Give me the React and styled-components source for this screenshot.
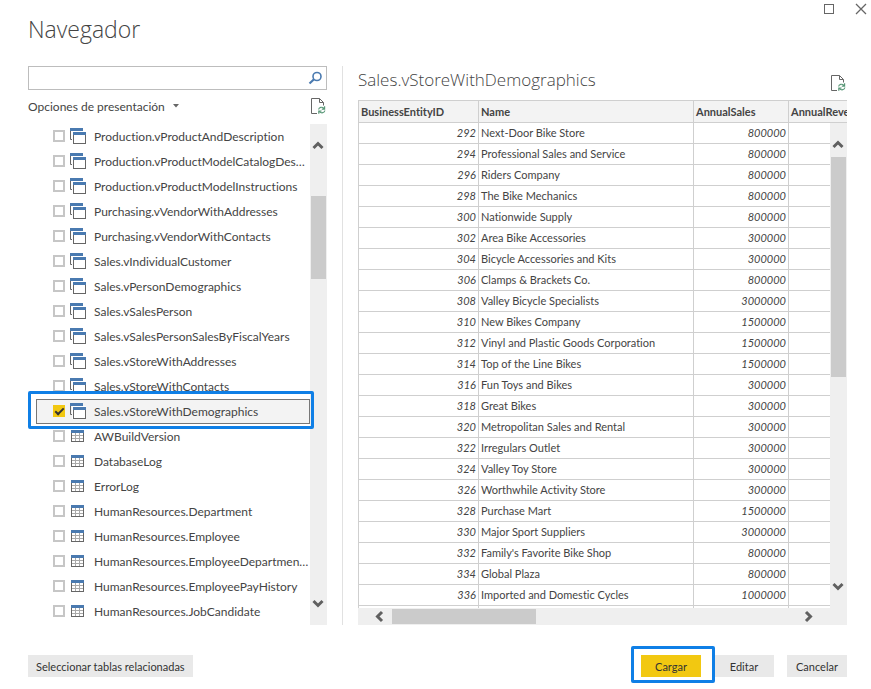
import React, { useState } from "react";
import styled, { createGlobalStyle } from "styled-components";

const GlobalStyle = createGlobalStyle`
  *, *::before, *::after { box-sizing: border-box; }
  body {
    margin: 0;
    background: #fff;
    color: #444;
    font-family: Lato, "Open Sans", sans-serif;
    font-size: 12px;
    font-variant-ligatures: none;
  }
  button, input { font: inherit; color: inherit; }
`;

const Dialog = styled.div`
  display: flex;
  flex-direction: column;
  height: 100vh;
  padding: 0 24px 8px 28px;
  overflow: hidden;
`;

const TitleBar = styled.header`
  display: flex;
  flex: none;
  justify-content: space-between;
  height: 66px;
`;

const Title = styled.h1`
  margin: 11px 0 0;
  font-family: "Open Sans", sans-serif;
  font-size: 23px;
  font-weight: 300;
  line-height: 36px;
`;

const WindowControls = styled.div`
  display: flex;
  gap: 20px;
  align-items: flex-start;
  margin: 3px -20px 0 0;
`;

const IconButton = styled.button`
  display: flex;
  padding: 0;
  border: 0;
  background: none;
  cursor: pointer;
`;

const Panels = styled.main`
  display: grid;
  grid-template-columns: minmax(0, 5fr) minmax(0, 8fr);
  flex: 1;
  min-height: 0;
  margin-bottom: 26px;
`;

const TreePanel = styled.section`
  display: flex;
  flex-direction: column;
  min-height: 0;
  padding-right: 15px;
  border-right: 1px solid #e1e1e1;
`;

const SearchBox = styled.label`
  display: flex;
  flex: none;
  align-items: center;
  height: 24px;
  padding: 0 4px;
  border: 1px solid #bdbdbd;
`;

const SearchInput = styled.input`
  flex: 1;
  min-width: 0;
  border: 0;
  outline: 0;
  background: none;
`;

const OptionsRow = styled.div`
  display: flex;
  flex: none;
  align-items: center;
  justify-content: space-between;
  height: 34px;
  padding-bottom: 2px;
`;

const OptionsButton = styled(IconButton)`
  align-items: center;
  gap: 8px;
`;

const ListFrame = styled.div`
  display: flex;
  flex: 1;
  min-height: 0;
`;

const List = styled.ul`
  flex: 1;
  min-width: 0;
  margin: 0;
  padding: 0 0 0 8px;
  list-style: none;
`;

const Item = styled.li`
  position: relative;
  height: 25px;
  border: 1px solid ${(p) => (p.$selected ? "#777" : "transparent")};
  background: ${(p) => (p.$selected ? "#f3f3f3" : "none")};
`;

const ItemLabel = styled.label`
  display: flex;
  align-items: center;
  height: 22px;
  padding-left: 16px;
`;

const CheckBox = styled.input`
  flex: none;
  display: grid;
  place-items: center;
  width: 12px;
  height: 12px;
  margin: 0 5px 0 0;
  appearance: none;
  border: 2px solid #c6c6c6;
  background: #fff;
  &:checked {
    border-color: #f2c811;
    background: #f2c811;
  }
  &:checked::before {
    content: "";
    width: 9px;
    height: 5px;
    margin-top: -2px;
    border: solid #333;
    border-width: 0 0 2px 2px;
    transform: rotate(-45deg);
  }
`;

const ItemText = styled.span`
  flex: 1;
  min-width: 0;
  margin-left: 8px;
  padding-top: 1px;
  line-height: 21px;
  overflow: hidden;
  text-overflow: ellipsis;
  white-space: nowrap;
`;

const Highlight = styled.span`
  position: absolute;
  inset: ${(p) => p.$inset};
  border: 3px solid #0f7fe6;
  border-radius: 2px;
  pointer-events: none;
  z-index: 1;
`;

const Track = styled.div`
  display: flex;
  flex: none;
  flex-direction: ${(p) => (p.$horizontal ? "row" : "column")};
  ${(p) => (p.$horizontal ? "height: 17px; padding-right: 17px;" : "width: 17px;")}
  background: #efefef;
`;

const ArrowButton = styled(IconButton)`
  flex: 0 0 34px;
  align-items: center;
  justify-content: center;
  padding: ${(p) => p.$pad};
`;

const Gap = styled.span`
  flex: ${(p) => p.$grow};
`;

const Thumb = styled.span`
  flex: ${(p) => p.$grow};
  margin: ${(p) => (p.$horizontal ? "1px 0" : "0 1px")};
  background: #cbcbcb;
`;

const PreviewPanel = styled.section`
  display: flex;
  flex-direction: column;
  min-width: 0;
  min-height: 0;
  padding-left: 15px;
`;

const PreviewHeader = styled.div`
  display: flex;
  flex: none;
  justify-content: space-between;
  align-items: center;
  height: 34px;
`;

const PreviewTitle = styled.h2`
  margin: 0 0 8px;
  font-family: "Open Sans", sans-serif;
  font-size: 17px;
  font-weight: 300;
`;

const GridFrame = styled.div`
  position: relative;
  flex: 1;
  min-height: 0;
  overflow: hidden;
`;

const GridScroll = styled.div`
  position: absolute;
  inset: 23px 0 0 auto;
  display: flex;
`;

const Table = styled.table`
  width: 580px;
  table-layout: fixed;
  border-collapse: collapse;
  font-size: 11px;
`;

const Th = styled.th`
  width: ${(p) => p.$width};
  height: 22px;
  padding: 0 2px;
  border: 1px solid #cfcfcf;
  background: #f3f3f3;
  text-align: left;
  font-weight: 700;
`;

const Td = styled.td`
  height: 21px;
  padding: 0 2px;
  border: 1px solid #cfcfcf;
  line-height: 16px;
  white-space: nowrap;
  text-align: ${(p) => (p.$number ? "right" : "left")};
  font-style: ${(p) => (p.$number ? "italic" : "normal")};
`;

const Footer = styled.footer`
  display: flex;
  flex: none;
  align-items: center;
  justify-content: space-between;
  height: 30px;
`;

const Actions = styled.div`
  display: flex;
  gap: 13px;
`;

const Emphasis = styled.div`
  position: relative;
  display: flex;
`;

const Button = styled.button`
  min-width: 60px;
  height: 22px;
  padding: 0 8px;
  border: 0;
  background: ${(p) => (p.$primary ? "#f2c811" : "#e9e9e9")};
  color: #333;
  font-size: 11px;
  cursor: pointer;
`;

const ViewIcon = () => (
  <svg width="16" height="16" viewBox="0 0 16 16" aria-hidden="true">
    <path d="M0.5 3V11.5H2" fill="none" stroke="#666" />
    <rect x="0" y="0" width="13" height="3" fill="#4a7ab0" />
    <rect x="2" y="3" width="14" height="13" fill="#fff" />
    <rect x="3.5" y="4.5" width="12" height="11" fill="#fff" stroke="#666" />
    <rect x="3" y="4" width="13" height="3" fill="#4a7ab0" />
  </svg>
);

const TableIcon = () => (
  <svg width="16" height="16" viewBox="0 0 16 16" aria-hidden="true">
    <rect x="1.5" y="2.5" width="12" height="11" fill="#fff" stroke="#666" />
    <path d="M5.5 5V13M9.5 5V13M2 7.5H13M2 10.5H13" stroke="#aaa" />
    <rect x="1" y="2" width="13" height="3" fill="#4a7ab0" />
  </svg>
);

const SearchIcon = () => (
  <svg width="14" height="14" viewBox="0 0 14 14" fill="none" stroke="#4a7ab0" aria-hidden="true">
    <circle cx="9" cy="5.5" r="4" strokeWidth="1.6" />
    <path d="M6 8.3L1.5 12.5" strokeWidth="2.2" />
  </svg>
);

const RefreshIcon = () => (
  <svg width="16" height="18" viewBox="0 0 16 18" fill="none" aria-hidden="true">
    <path d="M6 16.5H0.5V1.5H8.5L12.5 5.5V8.5M8.5 1.5V5.5H12.5" stroke="#666" />
    <path d="M7.6 12.5C8 10.2 11 9.4 13 11.4M13.6 9.3V12.1H10.8M13.9 13.5C13.4 15.9 10.4 16.6 8.5 14.6M7.8 16.8V14H10.6" stroke="#5a9878" strokeWidth="1.2" />
  </svg>
);

const CHEVRONS = {
  up: "M2.5 10L7 5.5L11.5 10",
  down: "M2.5 5L7 9.5L11.5 5",
  left: "M10 3L5.5 7.5L10 12",
  right: "M5 3L9.5 7.5L5 12",
};

const Chevron = ({ dir }) => (
  <svg width="15" height="15" viewBox="0 0 15 15" fill="none" stroke="#606060" strokeWidth="3" aria-hidden="true">
    <path d={CHEVRONS[dir]} />
  </svg>
);

const ScrollBar = ({ horizontal, before, size, after }) => (
  <Track $horizontal={horizontal}>
    <ArrowButton aria-label={horizontal ? "Izquierda" : "Arriba"} $pad={horizontal ? "0 0 0 9px" : "9px 0 0"}>
      <Chevron dir={horizontal ? "left" : "up"} />
    </ArrowButton>
    <Gap $grow={before} />
    <Thumb $grow={size} $horizontal={horizontal} />
    <Gap $grow={after} />
    <ArrowButton aria-label={horizontal ? "Derecha" : "Abajo"} $pad={horizontal ? "0 9px 0 0" : "0 0 9px"}>
      <Chevron dir={horizontal ? "right" : "down"} />
    </ArrowButton>
  </Track>
);

const VIEWS = [
  "Production.vProductAndDescription",
  "Production.vProductModelCatalogDescriptions",
  "Production.vProductModelInstructions",
  "Purchasing.vVendorWithAddresses",
  "Purchasing.vVendorWithContacts",
  "Sales.vIndividualCustomer",
  "Sales.vPersonDemographics",
  "Sales.vSalesPerson",
  "Sales.vSalesPersonSalesByFiscalYears",
  "Sales.vStoreWithAddresses",
  "Sales.vStoreWithContacts",
  "Sales.vStoreWithDemographics",
];

const TABLES = [
  "AWBuildVersion",
  "DatabaseLog",
  "ErrorLog",
  "HumanResources.Department",
  "HumanResources.Employee",
  "HumanResources.EmployeeDepartmentHistory",
  "HumanResources.EmployeePayHistory",
  "HumanResources.JobCandidate",
];

const ITEMS = [
  ...VIEWS.map((name) => ({ name, view: true })),
  ...TABLES.map((name) => ({ name, view: false })),
];

const FOCUSED = "Sales.vStoreWithDemographics";

const ROWS = [
  [292, "Next-Door Bike Store", 800000],
  [294, "Professional Sales and Service", 800000],
  [296, "Riders Company", 800000],
  [298, "The Bike Mechanics", 800000],
  [300, "Nationwide Supply", 800000],
  [302, "Area Bike Accessories", 300000],
  [304, "Bicycle Accessories and Kits", 300000],
  [306, "Clamps & Brackets Co.", 800000],
  [308, "Valley Bicycle Specialists", 3000000],
  [310, "New Bikes Company", 1500000],
  [312, "Vinyl and Plastic Goods Corporation", 1500000],
  [314, "Top of the Line Bikes", 1500000],
  [316, "Fun Toys and Bikes", 300000],
  [318, "Great Bikes", 300000],
  [320, "Metropolitan Sales and Rental", 300000],
  [322, "Irregulars Outlet", 300000],
  [324, "Valley Toy Store", 300000],
  [326, "Worthwhile Activity Store", 300000],
  [328, "Purchase Mart", 1500000],
  [330, "Major Sport Suppliers", 3000000],
  [332, "Family's Favorite Bike Shop", 800000],
  [334, "Global Plaza", 800000],
  [336, "Imported and Domestic Cycles", 1000000],
];

export default function App() {
  const [checked, setChecked] = useState([FOCUSED]);
  const [query, setQuery] = useState("");

  const toggle = (name) =>
    setChecked((list) => (list.includes(name) ? list.filter((n) => n !== name) : [...list, name]));

  return (
    <>
      <GlobalStyle />
      <Dialog>
        <TitleBar>
          <Title>Navegador</Title>
          <WindowControls>
            <IconButton aria-label="Maximizar">
              <svg width="12" height="12" viewBox="0 0 12 12" fill="none" stroke="#666">
                <rect x="1.5" y="1.5" width="9" height="9" />
              </svg>
            </IconButton>
            <IconButton aria-label="Cerrar">
              <svg width="12" height="12" viewBox="0 0 12 12" fill="none" stroke="#666" strokeWidth="1.3">
                <path d="M1 1L11 11M11 1L1 11" />
              </svg>
            </IconButton>
          </WindowControls>
        </TitleBar>

        <Panels>
          <TreePanel>
            <SearchBox>
              <SearchInput aria-label="Buscar" value={query} onChange={(e) => setQuery(e.target.value)} />
              <SearchIcon />
            </SearchBox>
            <OptionsRow>
              <OptionsButton>
                Opciones de presentación
                <svg width="6" height="4" viewBox="0 0 6 4" aria-hidden="true">
                  <path d="M0 0H6L3 3.5Z" fill="#666" />
                </svg>
              </OptionsButton>
              <IconButton aria-label="Actualizar lista">
                <RefreshIcon />
              </IconButton>
            </OptionsRow>
            <ListFrame>
              <List>
                {ITEMS.map(({ name, view }) => (
                  <Item key={name} $selected={name === FOCUSED}>
                    <ItemLabel>
                      <CheckBox type="checkbox" checked={checked.includes(name)} onChange={() => toggle(name)} />
                      {view ? <ViewIcon /> : <TableIcon />}
                      <ItemText>{name}</ItemText>
                    </ItemLabel>
                    {name === FOCUSED && <Highlight $inset="-9px -5px -6px -9px" />}
                  </Item>
                ))}
              </List>
              <ScrollBar before={38} size={83} after={312} />
            </ListFrame>
          </TreePanel>

          <PreviewPanel>
            <PreviewHeader>
              <PreviewTitle>Sales.vStoreWithDemographics</PreviewTitle>
              <IconButton aria-label="Actualizar vista previa">
                <RefreshIcon />
              </IconButton>
            </PreviewHeader>
            <GridFrame>
              <Table>
                <thead>
                  <tr>
                    <Th $width="120px">BusinessEntityID</Th>
                    <Th $width="215px">Name</Th>
                    <Th $width="95px">AnnualSales</Th>
                    <Th>AnnualRevenue</Th>
                  </tr>
                </thead>
                <tbody>
                  {ROWS.map(([id, name, sales]) => (
                    <tr key={id}>
                      <Td $number>{id}</Td>
                      <Td>{name}</Td>
                      <Td $number>{sales}</Td>
                      <Td />
                    </tr>
                  ))}
                  <tr>
                    <Td />
                    <Td />
                    <Td />
                    <Td />
                  </tr>
                </tbody>
              </Table>
              <GridScroll>
                <ScrollBar before={0} size={220} after={197} />
              </GridScroll>
            </GridFrame>
            <ScrollBar horizontal before={0} size={144} after={260} />
          </PreviewPanel>
        </Panels>

        <Footer>
          <Button>Seleccionar tablas relacionadas</Button>
          <Actions>
            <Emphasis>
              <Button $primary>Cargar</Button>
              <Highlight $inset="-9px -14px -6px -10px" />
            </Emphasis>
            <Button>Editar</Button>
            <Button>Cancelar</Button>
          </Actions>
        </Footer>
      </Dialog>
    </>
  );
}
